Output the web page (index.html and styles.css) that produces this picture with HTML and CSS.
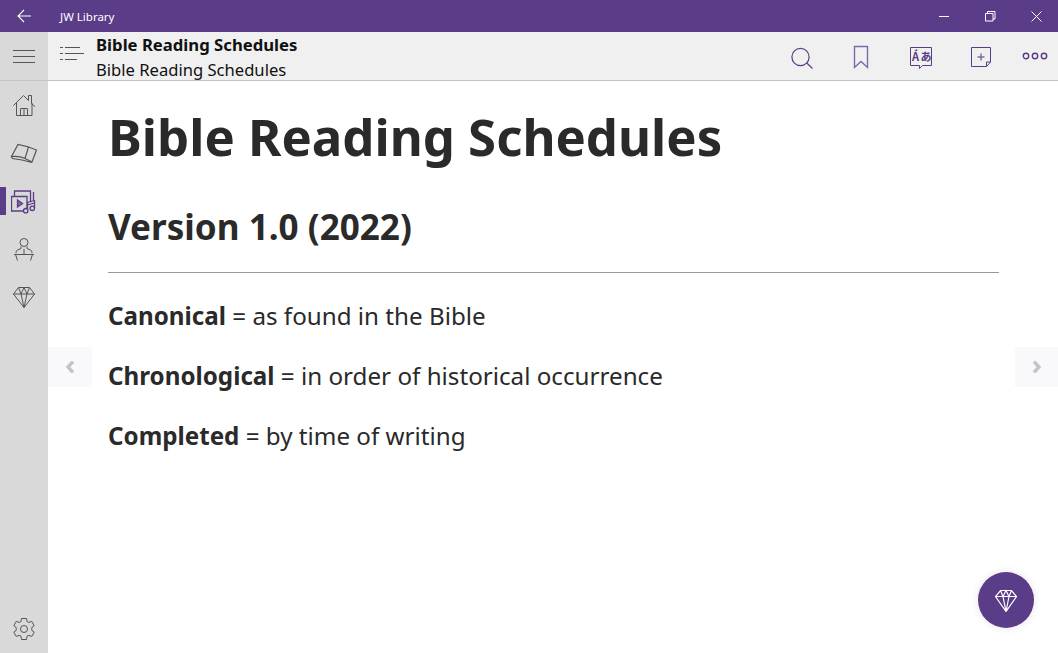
FILE: index.html
```html
<!DOCTYPE html>
<html lang="en">
<head>
    <meta charset="UTF-8">
    <title>JW Library</title>
    <link rel="stylesheet" href="styles.css">
</head>
<body>
    <!-- title bar -->
    <header class="titlebar">
        <div class="back">
            <svg width="16" height="16" viewBox="0 0 16 16"><path d="M15 8H2M8 2L2 8l6 6" fill="none" stroke="#fff" stroke-width="1.1"/></svg>
        </div>
        <span class="app-name">JW Library</span>
        <div class="win-buttons">
            <svg width="11" height="11" viewBox="0 0 11 11"><path d="M0 5.500h10" stroke="#fff" fill="none"/></svg>
            <svg width="11" height="11" viewBox="0 0 11 11"><path d="M.5 2.500h7.500v7.500H.5zM2.500 2.500V.5H10v7.500H8" stroke="#fff" fill="none"/></svg>
            <svg width="11" height="11" viewBox="0 0 11 11"><path d="M.5.5l10 10M10.500.5l-10 10" stroke="#fff" fill="none"/></svg>
        </div>
    </header>

    <div class="main">
        <!-- left rail -->
        <nav class="rail">
            <div class="rail-item menu">
                <svg width="24" height="16" viewBox="0 0 24 16"><path d="M1 2.500h22M1 8.500h22M1 14.500h22" stroke="#555" fill="none"/></svg>
            </div>
            <div class="rail-item">
                <svg width="24" height="24" viewBox="0 0 24 24"><path d="M1.300 12.700L11.500 2.500l5 5V2.500h3v8l3.500 3.200M4.500 10v12.500H20V10M8.500 22.500v-7h7v7M12 15.500v7" fill="none" stroke="#555"/></svg>
            </div>
            <div class="rail-item">
                <svg width="28" height="24" viewBox="0 0 28 24"><path d="M1.500 15.500L8 3.500l10.500 2.500L15 17.500c-4-2-9-2.500-13.500-2zM18.500 6l8 3-4.500 12-7-3.500M1.500 15.500l1 2 9.500 1.500 10 2.500" fill="none" stroke="#555" stroke-width="1.200"/></svg>
            </div>
            <div class="rail-item active">
                <svg width="26" height="26" viewBox="0 0 26 26"><g fill="none" stroke="#5b3c88" stroke-width="1.300"><path d="M.5 8.500H16V23H.5zM3.500 8.500V3h16v10M22.500 4v8"/><path d="M6.500 12v7l5-3.500z" fill="#8068a6"/><path d="M16.500 22v-7.500l7-2V20M16.500 17l7-2"/><circle cx="14.700" cy="22.700" r="2.200" fill="#d9d9d9"/><circle cx="21.300" cy="20.300" r="2.200" fill="#d9d9d9"/></g></svg>
            </div>
            <div class="rail-item">
                <svg width="24" height="24" viewBox="0 0 24 24"><circle cx="12" cy="5.500" r="4" fill="none" stroke="#555"/><path d="M9 9.500v2l-3.500 1.500c-1 .5-1.500 1.500-1.500 3M15 9.500v2l3.500 1.500c1 .5 1.500 1.500 1.500 3M2 17.500h20M3.500 17.500l2 6M20.500 17.500l-2 6M12 12v5.500" fill="none" stroke="#555"/></svg>
            </div>
            <div class="rail-item">
                <svg width="24" height="24" viewBox="0 0 24 24"><path d="M6.500 2.500h11l5 6.500L12 22.500 1.500 9zM1.500 9h21M6.500 2.500L9 9l3-6.500L15 9l2.500-6.500M9 9l3 13.500L15 9" fill="none" stroke="#555"/></svg>
            </div>
            <div class="rail-item settings">
                <svg width="24" height="24" viewBox="0 0 24 24"><path d="M9.500 1.500h5l.5 3 2 1 2.700-1.200 2.500 4.400-2.400 1.800v2.800l2.400 1.800-2.500 4.400L17 18.300l-2 1-.5 3.200h-5l-.5-3.200-2-1-2.700 1.200-2.500-4.400 2.400-1.800V10.500L1.800 8.700l2.500-4.400L7 5.500l2-1z" fill="none" stroke="#555"/><circle cx="12" cy="12" r="3.500" fill="none" stroke="#555"/></svg>
            </div>
        </nav>

        <div class="right">
            <!-- toolbar -->
            <div class="toolbar">
                <div class="toc">
                    <svg width="24" height="16" viewBox="0 0 24 16"><path d="M0 .5h3M5 .5h15M0 6.500h3M5 6.500h19M0 12.500h3M5 12.500h12" stroke="#555" fill="none"/></svg>
                </div>
                <div class="doc-title">
                    <div class="doc-title-main">Bible Reading Schedules</div>
                    <div class="doc-title-sub">Bible Reading Schedules</div>
                </div>
                <div class="tools">
                    <svg width="24" height="24" viewBox="0 0 24 24"><circle cx="11.500" cy="13" r="8.600" fill="none" stroke="#5b3c88" stroke-width="1.200"/><path d="M17.800 19l5.700 5.500" stroke="#5b3c88" stroke-width="1.200"/></svg>
                    <svg width="24" height="24" viewBox="0 0 24 24"><path d="M5.500 2.500h13v21L12 17.500l-6.500 6z" fill="none" stroke="#8068a6" stroke-width="1.400"/></svg>
                    <svg width="24" height="24" viewBox="0 0 24 24"><path d="M1.500 3.500h21v18h-9l-3 3v-3h-9z" fill="none" stroke="#5b3c88"/><text x="3" y="17" class="lang-a">Á</text><text x="11.500" y="17" class="lang-b">あ</text></svg>
                    <svg width="24" height="24" viewBox="0 0 24 24"><path d="M17.500 22.500h-15v-19h19v14.500zM17.500 22.500v-4.500h4" fill="none" stroke="#5b3c88"/><path d="M12 9.500v7M8.500 13h7" stroke="#8068a6" stroke-width="1.400"/></svg>
                    <svg class="more" width="26" height="24" viewBox="0 0 26 24"><g fill="none" stroke="#5b3c88" stroke-width="1.400"><circle cx="4" cy="12" r="2.700"/><circle cx="13" cy="12" r="2.700"/><circle cx="22" cy="12" r="2.700"/></g></svg>
                </div>
            </div>

            <!-- article -->
            <main class="article">
                <h1>Bible Reading Schedules</h1>
                <h2>Version 1.0 (2022)</h2>
                <hr>
                <p><b>Canonical</b> = as found in the Bible</p>
                <p><b>Chronological</b> = in order of historical occurrence</p>
                <p><b>Completed</b> = by time of writing</p>

                <div class="pager prev">
                    <svg width="10" height="12" viewBox="0 0 10 12"><path d="M8 .5L3 6l5 5.500" fill="none" stroke="#c4c4c4" stroke-width="3.400"/></svg>
                </div>
                <div class="pager next">
                    <svg width="10" height="12" viewBox="0 0 10 12"><path d="M2 .5L7 6l-5 5.500" fill="none" stroke="#c4c4c4" stroke-width="3.400"/></svg>
                </div>
                <div class="fab">
                    <svg width="24" height="24" viewBox="0 0 24 24"><path d="M6.500 2.500h11l5 6L12 23.500 1.500 8.500zM1.500 8.500h21M6.500 2.500L9 8.500l3-6 3 6 2.500-6M9 8.500l3 15 3-15" fill="none" stroke="#fff" stroke-width="1.200"/></svg>
                </div>
            </main>
        </div>
    </div>
</body>
</html>
```

FILE: styles.css
```css
*{
    margin: 0;
    padding: 0;
    box-sizing: border-box;
}
html, body{
    height: 100%;
}
body{
    display: flex;
    flex-direction: column;
    overflow: hidden;
    font-family: "Noto Sans", "Open Sans", sans-serif;
    color: #2a2a2a;
    background-color: #fff;
}

/* title bar */
.titlebar{
    display: flex;
    align-items: center;
    height: 32px;
    flex: none;
    background-color: #5b3c88;
    color: #fff;
}
.back{
    display: flex;
    justify-content: center;
    width: 48px;
}
.app-name{
    margin-left: 12px;
    font-size: 11.5px;
}
.win-buttons{
    display: flex;
    margin-left: auto;
    margin-right: 16px;
    gap: 35px;
}

.main{
    display: flex;
    flex: 1;
    min-height: 0;
}

/* left rail */
.rail{
    display: flex;
    flex-direction: column;
    width: 48px;
    flex: none;
    background-color: #d9d9d9;
}
.rail-item{
    position: relative;
    display: flex;
    align-items: center;
    justify-content: center;
    height: 48px;
    flex: none;
}
.rail-item.menu{
    height: 49px;
    border-bottom: 1px solid #c4c4c4;
}
/* short bar beside the selected item */
.rail-item.active::before{
    content: "";
    position: absolute;
    left: 0;
    top: 10px;
    width: 6px;
    height: 28px;
    background-color: #5b3c88;
}
.rail-item.settings{
    margin-top: auto;
}

.right{
    display: flex;
    flex-direction: column;
    flex: 1;
    min-width: 0;
}

/* toolbar */
.toolbar{
    display: flex;
    align-items: center;
    height: 49px;
    flex: none;
    background-color: #f0f0f0;
    border-bottom: 1px solid #c4c4c4;
}
.toc{
    display: flex;
    width: 48px;
    justify-content: center;
    padding-bottom: 2px;
}
.doc-title{
    padding-top: 2px;
    color: #111;
}
.doc-title-main{
    font-size: 16.7px;
    line-height: 22px;
    font-weight: 700;
}
.doc-title-sub{
    margin-top: 4px;
    font-size: 16.6px;
    line-height: 20px;
}
.tools{
    display: flex;
    align-items: center;
    margin-left: auto;
    margin-right: 10px;
    gap: 36px;
}
.tools svg{
    overflow: visible;
}
.tools .more{
    margin-left: -7px;
}
.lang-a, .lang-b{
    font-size: 11px;
    font-weight: 700;
    fill: #5b3c88;
    font-family: "Noto Sans CJK JP", "Noto Sans", sans-serif;
}

/* article */
.article{
    position: relative;
    flex: 1;
    padding: 20px 59px 0 60px;
}
h1{
    font-size: 50.9px;
    line-height: 72px;
    font-weight: 700;
}
h2{
    margin-top: 28px;
    font-size: 35.1px;
    line-height: 50px;
    font-weight: 700;
}
hr{
    margin-top: 21px;
    border: none;
    border-top: 1px solid #999;
}
p{
    margin-top: 26px;
    font-size: 24.2px;
    line-height: 34px;
}
.pager{
    position: absolute;
    top: 266px;
    display: flex;
    align-items: center;
    justify-content: center;
    width: 44px;
    height: 40px;
    background-color: #f9f9fb;
}
.prev{
    left: 0;
}
.next{
    right: 0;
    width: 43px;
}
.fab{
    position: absolute;
    right: 24px;
    bottom: 25px;
    display: flex;
    align-items: center;
    justify-content: center;
    width: 56px;
    height: 56px;
    border-radius: 50%;
    background-color: #5b3c88;
    box-shadow: 0 0 5px 3px #f3f3f6;
}
```
